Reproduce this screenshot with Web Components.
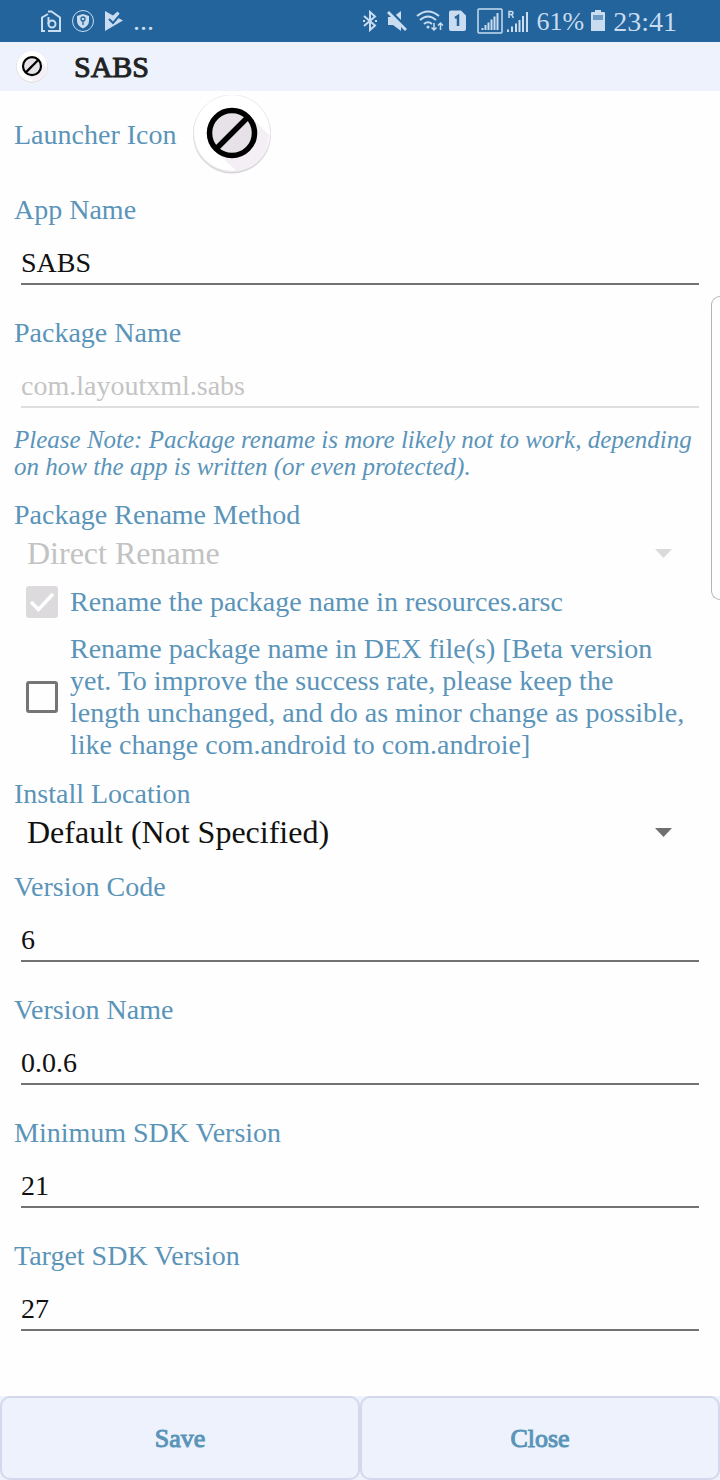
<!DOCTYPE html>
<html lang="en">
<head>
<meta charset="utf-8">
<meta name="viewport" content="width=device-width, initial-scale=1">
<title>SABS</title>
<style>
body {
  margin: 0;
  background: #fefefe;
  color: #111;
  font-family: "Liberation Serif", "Times New Roman", serif;
  --accent: #5a94b9;
  --tint: #edf2fc;
}
</style>
</head>
<body>
<edit-screen>
  <status-bar slot="top" battery="61%" time="23:41"></status-bar>
  <app-bar slot="top">SABS</app-bar>

  <icon-field label="Launcher Icon"></icon-field>
  <text-field label="App Name" value="SABS"></text-field>
  <text-field label="Package Name" value="com.layoutxml.sabs" disabled></text-field>
  <note-text>Please Note: Package rename is more likely not to work, depending<br>on how the app is written (or even protected).</note-text>
  <select-field label="Package Rename Method" value="Direct Rename" disabled></select-field>
  <check-field checked disabled>Rename the package name in resources.arsc</check-field>
  <check-field>Rename package name in DEX file(s) [Beta version<br>yet. To improve the success rate, please keep the<br>length unchanged, and do as minor change as possible,<br>like change com.android to com.androie]</check-field>
  <select-field label="Install Location" value="Default (Not Specified)"></select-field>
  <text-field label="Version Code" value="6"></text-field>
  <text-field label="Version Name" value="0.0.6"></text-field>
  <text-field label="Minimum SDK Version" value="21"></text-field>
  <text-field label="Target SDK Version" value="27"></text-field>

  <action-button slot="actions">Save</action-button>
  <action-button slot="actions">Close</action-button>
</edit-screen>

<script>
// attaches an open shadow root filled from the given markup
class BaseElement extends HTMLElement {
  constructor() {
    super();
    const tmpl = document.createElement('template');
    tmpl.innerHTML = this.constructor.markup;
    this.attachShadow({ mode: 'open' }).appendChild(tmpl.content.cloneNode(true));
  }
  $(selector) {
    return this.shadowRoot.querySelector(selector);
  }
}

class EditScreen extends BaseElement {
  static markup = `
<style>
:host {
  position: relative;
  display: flex;
  flex-direction: column;
  min-height: 100vh;
}
main {
  flex: 1;
  padding: 0 14px 32px;
}
footer {
  display: flex;
  background: var(--tint);
}
/* handle of the edge panel, lies over the right side of the form */
.edge {
  position: absolute;
  top: 296px;
  right: 0;
  width: 8px;
  height: 302px;
  border: 1px solid #b4b4b4;
  border-right: 0;
  border-radius: 9px 0 0 9px;
  background: #fefefe;
}
</style>
<slot name="top"></slot>
<main><slot></slot></main>
<footer><slot name="actions"></slot></footer>
<div class="edge"></div>
`;
}

class StatusBar extends BaseElement {
  static markup = `
<style>
:host {
  display: flex;
  justify-content: space-between;
  height: 42px;
  padding: 0 43px 0 40px;
  background: #22649b;
  color: #c9dcf0;
}
div {
  display: flex;
  align-items: center;
}
.left { gap: 9px; }
.right { gap: 4px; }
svg { display: block; }
.dots { font-size: 28px; }
.battery { font-size: 26px; margin: 0 1px 0 4px; }
.time { font-size: 28px; margin-left: 2px; }
.battery, .time { padding-top: 2px; }
</style>
<div class="left">
  <svg width="22" height="24" viewBox="0 0 22 24" fill="none" stroke="currentColor" stroke-width="2">
    <path d="M5 22H2V8.500L8 5M8 2.500L11.500 2.500L20 8.500V22H8"/>
    <path d="M8.500 8V15"/>
    <circle cx="12" cy="15" r="3.500"/>
  </svg>
  <svg width="24" height="24" viewBox="0 0 24 24">
    <circle cx="12" cy="12" r="10.500" fill="none" stroke="currentColor"/>
    <path d="M12 5L18 7V12Q18 17 12 19.500Q6 17 6 12V7Z" fill="currentColor"/>
    <circle cx="12" cy="10" r="2" fill="none" stroke="#22649b" stroke-width="1.300"/>
    <path d="M12 12V16" stroke="#22649b" stroke-width="1.300"/>
  </svg>
  <svg width="20" height="24" viewBox="0 0 20 24">
    <path d="M1 2L9 6.500L13.500 2.500L15.500 4.500L13.500 8.500L19 11.500L1 22Z" fill="currentColor"/>
    <path d="M5 10L9 14L15.500 6.500" fill="none" stroke="#22649b" stroke-width="2"/>
  </svg>
  <span class="dots">...</span>
</div>
<div class="right">
  <svg width="20" height="24" viewBox="0 0 20 24" fill="none" stroke="currentColor" stroke-width="2">
    <path d="M4 7L15 16.500L10 21V3L15 7.500L4 17"/>
    <path d="M3 12h2M15 12h2"/>
  </svg>
  <svg width="26" height="24" viewBox="0 0 26 24">
    <path d="M4 8H9L17 2V22L9 16H4Z" fill="currentColor"/>
    <path d="M5 1L25 21" stroke="#22649b" stroke-width="3"/>
    <path d="M4 3L22 21" stroke="currentColor" stroke-width="2.800"/>
  </svg>
  <svg width="30" height="24" viewBox="0 0 30 24" fill="none" stroke="currentColor" stroke-width="2">
    <path d="M3 7Q14-2 25 7M6 11Q14 4 22 11M10 15Q14 11.500 18 15"/>
    <circle cx="14" cy="18" r="1.500" fill="currentColor" stroke="none"/>
    <path d="M20 14V21M17.500 18.500L20 21L22.500 18.500M26.500 21V14M24 16.500L26.500 14L29 16.500" stroke-width="1.500"/>
  </svg>
  <svg width="20" height="24" viewBox="0 0 20 24">
    <path d="M3 1.500H13L18 6.500V20a2 2 0 0 1-2 2H3a2 2 0 0 1-2-2V3.500a2 2 0 0 1 2-2Z" fill="currentColor"/>
    <path d="M7 9L10 7V17" fill="none" stroke="#22649b" stroke-width="2.500"/>
  </svg>
  <svg width="31" height="26" viewBox="0 0 31 26" fill="none" stroke="currentColor">
    <rect x="6" y="1" width="24" height="24" rx="1" stroke-width="1.500"/>
    <path d="M10.500 22V20M13.500 22V17M16.500 22V14.500M19.500 22V11.500M22.500 22V8.500M25.500 22V5" stroke-width="2"/>
  </svg>
  <svg width="22" height="26" viewBox="0 0 22 26" fill="none" stroke="currentColor">
    <path d="M2 10V3.500H4.500a1.500 1.500 0 0 1 0 3H2M4.500 6.500L6.500 10" stroke-width="1.500"/>
    <path d="M1 24V21.500M5 24V18.500M9 24V15.500M12.500 24V12M16 24V8M20 24V4" stroke-width="2"/>
  </svg>
  <span class="battery"></span>
  <svg width="18" height="24" viewBox="0 0 18 24">
    <path d="M6 1H12V3H15a1 1 0 0 1 1 1V22H2V4a1 1 0 0 1 1-1H6Z" fill="currentColor"/>
    <path d="M4 6H14V11H4Z" fill="#6e9bc4"/>
  </svg>
  <span class="time"></span>
</div>
`;
  connectedCallback() {
    this.$('.battery').textContent = this.getAttribute('battery');
    this.$('.time').textContent = this.getAttribute('time');
  }
}

// round launcher icon: no-entry ring with a long shadow
class AppIcon extends BaseElement {
  static markup = `
<style>
:host {
  display: block;
  width: var(--icon-size, 32px);
  height: var(--icon-size, 32px);
}
svg { display: block; width: 100%; height: 100%; }
</style>
<svg viewBox="0 0 80 80">
  <circle cx="40" cy="39.500" r="39" fill="#d2ced4"/>
  <circle cx="40" cy="38.500" r="39" fill="#e9e5ea"/>
  <circle cx="40" cy="38" r="38" fill="#fff"/>
  <path d="M58 21L77 40Q74 70 44 75.500L22 55Z" fill="#f3eff5"/>
  <circle cx="40" cy="38" r="22.500" fill="#e6e2e7" stroke="#000" stroke-width="5.500"/>
  <path d="M24 54L56 22" stroke="#000" stroke-width="5.500"/>
</svg>
`;
}

class AppBar extends BaseElement {
  static markup = `
<style>
:host {
  display: flex;
  align-items: center;
  gap: 26px;
  height: 49px;
  padding: 0 16px;
  background: var(--tint);
}
h1 {
  margin: 0;
  font-size: 30px;
  font-weight: normal;
  line-height: 48px;
  color: #222;
  -webkit-text-stroke: 1px #222;
}
</style>
<app-icon></app-icon>
<h1><slot></slot></h1>
`;
}

class IconField extends BaseElement {
  static markup = `
<style>
:host {
  display: flex;
  align-items: center;
  gap: 16px;
  height: 87px;
  margin-bottom: 16px;
  --icon-size: 80px;
}
label {
  color: var(--accent);
  font-size: 28px;
  line-height: 32px;
}
button {
  padding: 0;
  border: 0;
  background: none;
}
</style>
<label for="icon"></label>
<button id="icon" type="button"><app-icon></app-icon></button>
`;
  connectedCallback() {
    this.$('label').textContent = this.getAttribute('label');
  }
}

class TextField extends BaseElement {
  static markup = `
<style>
:host {
  display: block;
  margin-bottom: 32px;
}
label {
  display: block;
  color: var(--accent);
  font-size: 28px;
  line-height: 32px;
}
div { padding: 0 7px; }
input {
  display: block;
  box-sizing: border-box;
  width: 100%;
  height: 59px;
  padding: 17px 0 0;
  border: 0;
  border-bottom: 2px solid #737373;
  border-radius: 0;
  outline: 0;
  background: none;
  color: #111;
  font: 28px "Liberation Serif", "Times New Roman", serif;
}
input:disabled {
  color: #c4c4c4;
  border-color: #dedede;
}
</style>
<label for="input"></label>
<div><input id="input" type="text"></div>
`;
  connectedCallback() {
    this.$('label').textContent = this.getAttribute('label');
    this.$('input').value = this.getAttribute('value');
    this.$('input').disabled = this.hasAttribute('disabled');
  }
}

class NoteText extends BaseElement {
  static markup = `
<style>
:host {
  display: block;
  margin: -14px 0 19px;
  color: var(--accent);
  font-size: 25px;
  font-style: italic;
  line-height: 27px;
}
</style>
<slot></slot>
`;
}

class SelectField extends BaseElement {
  static markup = `
<style>
:host {
  display: block;
  margin-bottom: 17px;
}
:host([disabled]) { margin-bottom: 11px; }
label {
  display: block;
  color: var(--accent);
  font-size: 28px;
  line-height: 32px;
}
div {
  display: grid;
  align-items: center;
  padding: 0 34px 0 13px;
}
select, svg { grid-area: 1 / 1; }
select {
  appearance: none;
  width: 100%;
  height: 44px;
  padding: 0;
  border: 0;
  outline: 0;
  background: none;
  color: #111;
  opacity: 1;
  font: 32px "Liberation Serif", "Times New Roman", serif;
}
svg {
  justify-self: end;
  color: #6f6f6f;
  pointer-events: none;
}
:host([disabled]) select { color: #c2c2c2; }
:host([disabled]) svg { color: #dadada; }
</style>
<label for="select"></label>
<div>
  <select id="select"><option></option></select>
  <svg width="17" height="9" viewBox="0 0 17 9"><path d="M0 0H17L8.500 9Z" fill="currentColor"/></svg>
</div>
`;
  connectedCallback() {
    this.$('label').textContent = this.getAttribute('label');
    this.$('option').textContent = this.getAttribute('value');
    this.$('select').disabled = this.hasAttribute('disabled');
  }
}

class CheckField extends BaseElement {
  static markup = `
<style>
:host {
  display: flex;
  align-items: center;
  gap: 12px;
  margin-bottom: 17px;
  padding-left: 12px;
}
:host([disabled]) { margin-bottom: 15px; }
.box {
  display: grid;
  flex: none;
}
input, svg { grid-area: 1 / 1; }
input {
  appearance: none;
  box-sizing: border-box;
  width: 32px;
  height: 32px;
  margin: 0;
  border: 3px solid #757575;
  border-radius: 3px;
}
input:disabled {
  border: 0;
  background: #dcdadd;
}
svg {
  visibility: hidden;
  pointer-events: none;
}
input:checked + svg { visibility: visible; }
label {
  color: var(--accent);
  font-size: 28px;
  line-height: 32px;
}
</style>
<span class="box">
  <input id="check" type="checkbox">
  <svg width="32" height="32" viewBox="0 0 32 32"><path d="M5 16L12.500 23.500L27 8" fill="none" stroke="#fff" stroke-width="3.500"/></svg>
</span>
<label for="check"><slot></slot></label>
`;
  connectedCallback() {
    this.$('input').checked = this.hasAttribute('checked');
    this.$('input').disabled = this.hasAttribute('disabled');
  }
}

class ActionButton extends BaseElement {
  static markup = `
<style>
:host {
  display: flex;
  flex: 1;
}
button {
  flex: 1;
  height: 84px;
  padding: 2px 0 0;
  border: 2px solid #d3d8ec;
  border-radius: 10px;
  background: var(--tint);
  color: var(--accent);
  font: 26px "Liberation Serif", "Times New Roman", serif;
  -webkit-text-stroke: 1px var(--accent);
}
</style>
<button type="button"><slot></slot></button>
`;
}

customElements.define('app-icon', AppIcon);
customElements.define('status-bar', StatusBar);
customElements.define('app-bar', AppBar);
customElements.define('icon-field', IconField);
customElements.define('text-field', TextField);
customElements.define('note-text', NoteText);
customElements.define('select-field', SelectField);
customElements.define('check-field', CheckField);
customElements.define('action-button', ActionButton);
customElements.define('edit-screen', EditScreen);
</script>
</body>
</html>
